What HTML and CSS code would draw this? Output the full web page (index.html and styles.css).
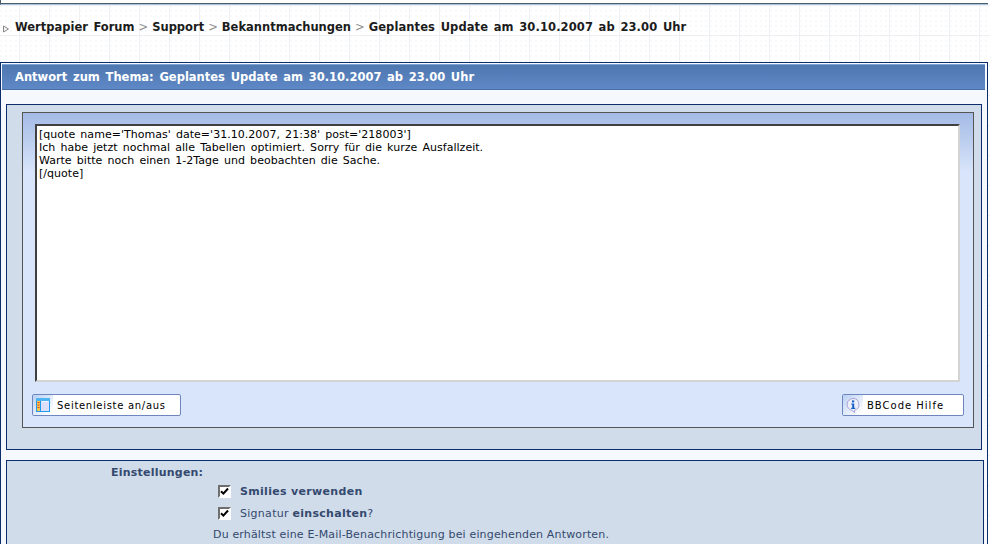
FILE: index.html
```html
<!DOCTYPE html>
<html lang="de">
<head>
<meta charset="utf-8">
<title>Antwort zum Thema</title>
<link rel="stylesheet" href="styles.css">
</head>
<body>
<div class="topbar"></div>
<nav class="crumbs">
  <svg class="crumb-arrow" width="8" height="8" viewBox="0 0 8 8"><path d="M1.5 1 L6.5 4 L1.5 7 Z" fill="#f4f4f4" stroke="#8a8a8a"/></svg>
  <a>Wertpapier Forum</a><span class="sep">&gt;</span><a>Support</a><span class="sep">&gt;</span><a>Bekanntmachungen</a><span class="sep">&gt;</span><a class="last">Geplantes Update am 30.10.2007 ab 23.00 Uhr</a>
</nav>
<main class="main">
  <h1 class="title">Antwort zum Thema: Geplantes Update am 30.10.2007 ab 23.00 Uhr</h1>
  <section class="editor-box">
    <div class="editor-panel">
      <div class="textarea">[quote name='Thomas' date='31.10.2007, 21:38' post='218003']<br>Ich habe jetzt nochmal alle Tabellen optimiert. Sorry für die kurze Ausfallzeit.<br>Warte bitte noch einen 1-2Tage und beobachten die Sache.<br>[/quote]</div>
      <div class="tools">
        <div class="btn btn-side">
          <span class="btn-icon"><svg width="16" height="16" viewBox="0 0 16 16"><rect x="1.5" y="1.5" width="13" height="13" fill="#dcdffa" stroke="#1e9bf0"/><rect x="1" y="1" width="14" height="3" fill="#4fb4f6"/><rect x="2" y="4" width="3" height="10" fill="#f6c64c"/><path d="M2.5 5.5h2M2.5 8h2M2.5 10.5h2" stroke="#e0452a" stroke-width="1.2"/><path d="M5.5 4v10" stroke="#1e9bf0"/><path d="M6.5 4.5h7" stroke="#f4f5ff"/></svg></span>
          <span>Seitenleiste an/aus</span>
        </div>
        <div class="btn btn-help">
          <span class="btn-icon"><svg width="16" height="16" viewBox="0 0 16 16"><path d="M8 1.5a6 6 0 0 1 1.5 11.8L9.5 15.5 7 13.4A6 6 0 0 1 8 1.5Z" fill="#eeeefb" stroke="#aaa6d6"/><rect x="7" y="3.4" width="2.2" height="2" fill="#1560c8"/><path d="M6.2 6.4H9.2V10.8H10.2V12H6.2V10.8H7.2V7.6H6.2Z" fill="#1560c8"/></svg></span>
          <span>BBCode Hilfe</span>
        </div>
      </div>
    </div>
  </section>
  <section class="options">
    <div class="options-label">Einstellungen:</div>
    <div class="opt opt-first"><span class="check"><svg width="9" height="9" viewBox="0 0 9 9"><path d="M1 4.2 L3.4 6.6 L8 1.5" fill="none" stroke="#000" stroke-width="2"/></svg></span><span class="strong">Smilies verwenden</span></div>
    <div class="opt"><span class="check"><svg width="9" height="9" viewBox="0 0 9 9"><path d="M1 4.2 L3.4 6.6 L8 1.5" fill="none" stroke="#000" stroke-width="2"/></svg></span><span class="plain">Signatur <b>einschalten</b>?</span></div>
    <div class="note">Du erhältst eine E-Mail-Benachrichtigung bei eingehenden Antworten.</div>
  </section>
</main>
</body>
</html>
```
FILE: styles.css
```css
* { box-sizing: border-box; }
html, body { margin: 0; padding: 0; height: 544px; overflow: hidden; }
body {
  font-family: "DejaVu Sans", Verdana, sans-serif;
  font-size: 11px;
  color: #000;
  background-color: #fff;
  background-image:
    linear-gradient(to right, #eef0f4 1px, transparent 1px),
    linear-gradient(to bottom, #eef0f4 1px, transparent 1px),
    radial-gradient(circle at 1px 1px, #f8f9fb 1px, transparent 1px);
  background-size: 30px 30px, 30px 30px, 5px 5px;
  background-position: 19px 5px, 19px 5px, 0 0;
}
.topbar { width: 988px; height: 5px; background: #fff; border-left: 1px solid #4d5a68; border-bottom: 1px solid #a9c5df; box-shadow: inset 0 -1px 0 #4d5a68; }
.crumbs { height: 57px; padding: 14px 0 0 2px; display: flex; align-items: flex-start; font-size: 11.5px; word-spacing: 1.5px; font-weight: bold; color: #1c1c1c; white-space: nowrap; line-height: 16px; }
.crumb-arrow { margin: 6px 5px 0 0; }
.sep { font-weight: normal; color: #8f8f8f; margin: 0 4px; }
.last { letter-spacing: 0.1px; }
.main { width: 988px; height: 490px; border: 1px solid #0b2d6c; border-bottom: 0; background: #f5f9fd; padding: 1px 2px 0 1px; }
.title { margin: 0; height: 26px; padding: 0 0 0 13px; font-size: 11.5px; word-spacing: 1.7px; line-height: 25px; font-weight: bold; color: #fff; background: linear-gradient(#4f77b0, #5e88c6); border-top: 1px solid #7da2d6; border-bottom: 1px solid #4a6ea8; }
.editor-box { width: 976px; height: 346px; margin: 14px 0 0 4px; border: 1px solid #0b2d6c; background: #d0dce9; padding: 7px; }
.editor-panel { height: 316px; margin-left: 8px; width: 952px; border: 1px solid #555; background: linear-gradient(#a4bbe6 0, #d9e5fa 60px, #d9e5fa 100%); padding: 11px 13px 0 12px; }
.textarea { height: 258px; width: 925px; background: #fff; border: 2px solid; border-color: #404040 #d4d4d4 #d4d4d4 #404040; padding: 2px 2px; font-size: 11px; word-spacing: 1.6px; letter-spacing: 0.03px; line-height: 13px; color: #000; }
.tools { display: flex; justify-content: space-between; margin: 12px -4px 0 -3px; }
.btn { height: 22px; background: #fff; border: 1px solid #6f85bd; border-radius: 2px; display: flex; align-items: center; font-size: 10px; letter-spacing: 0.7px; }
.btn-side { width: 149px; }
.btn-help { width: 122px; letter-spacing: 1px; }
.btn-icon { width: 20px; height: 20px; display: flex; align-items: center; justify-content: center; margin-right: 4px; background: linear-gradient(135deg, #b9d0f3, #fff 90%); }
.options { width: 978px; height: 90px; margin: 10px 0 0 4px; border: 1px solid #0b2d6c; background: #d0dce9; color: #34496f; font-size: 11px; }
.options-label { margin-left: 104px; padding-top: 5px; font-weight: bold; line-height: 14px; letter-spacing: 0.22px; }
.opt { display: flex; align-items: center; margin-left: 211px; margin-top: 8px; height: 14px; }
.opt-first { margin-top: 4px; }
.check { width: 13px; height: 13px; background: #fff; border: 2px solid; border-color: #6e6e6e #fff #fff #6e6e6e; margin-right: 9px; display: flex; align-items: center; justify-content: center; }
.strong { font-weight: bold; letter-spacing: 0.32px; }
.plain { letter-spacing: 0.28px; }
.note { margin: 8px 0 0 206px; line-height: 14px; font-size: 11px; letter-spacing: 0.16px; }
```
